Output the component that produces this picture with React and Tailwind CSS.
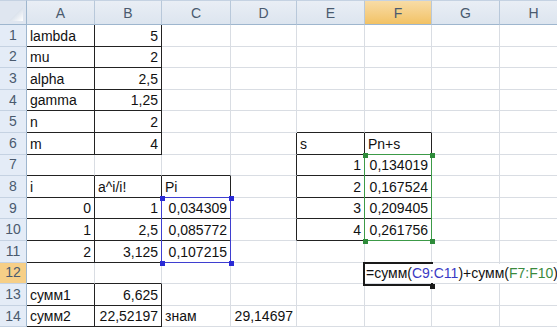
import React from 'react';

const COLS = ['A', 'B', 'C', 'D', 'E', 'F', 'G', 'H'];
const COL_X = [27, 95, 162, 231, 297, 365, 432, 500, 568];
const ROW_H = 21.6;
const HEAD_H = 25;
const rowY = (r) => HEAD_H + (r - 1) * ROW_H;

// cell values: row + column -> text; numbers are right aligned
const cells = {
  '1A': 'lambda', '1B': 5,
  '2A': 'mu', '2B': 2,
  '3A': 'alpha', '3B': '2,5',
  '4A': 'gamma', '4B': '1,25',
  '5A': 'n', '5B': 2,
  '6A': 'm', '6B': 4, '6E': 's', '6F': 'Pn+s',
  '7E': 1, '7F': '0,134019',
  '8A': 'i', '8B': 'a^i/i!', '8C': 'Pi', '8E': 2, '8F': '0,167524',
  '9A': 0, '9B': 1, '9C': '0,034309', '9E': 3, '9F': '0,209405',
  '10A': 1, '10B': '2,5', '10C': '0,085772', '10E': 4, '10F': '0,261756',
  '11A': 2, '11B': '3,125', '11C': '0,107215',
  '13A': 'сумм1', '13B': '6,625',
  '14A': 'сумм2', '14B': '22,52197', '14C': 'знам', '14D': '29,14697',
};

const isNum = (v) => typeof v === 'number' || /^[\d,]+$/.test(String(v));

// cells that carry black borders
const boxed = new Set();
const addRange = (r1, c1, r2, c2) => {
  for (let r = r1; r <= r2; r++)
    for (let c = c1; c <= c2; c++) boxed.add(`${r}${COLS[c]}`);
};
addRange(1, 0, 6, 1);
addRange(8, 0, 11, 2);
addRange(13, 0, 14, 1);
addRange(6, 4, 10, 5);

const has = (r, c) => c >= 0 && c < COLS.length && boxed.has(`${r}${COLS[c]}`);

const Cell = ({ r, c }) => {
  const v = cells[`${r}${COLS[c]}`];
  const right = has(r, c) || has(r, c + 1);
  const bottom = has(r, c) || has(r + 1, c);
  return (
    <div
      className={`flex items-end overflow-hidden whitespace-nowrap border-r border-b px-[3px] pb-[1px] leading-[18px] text-[#111] ${
        right ? 'border-r-[#222]' : 'border-r-[#d9dde3]'
      } ${bottom ? 'border-b-[#222]' : 'border-b-[#d9dde3]'} ${
        v !== undefined && isNum(v) ? 'justify-end' : 'justify-start'
      }`}
    >
      {v !== undefined ? String(v) : ''}
    </div>
  );
};

const Handle = ({ x, y, color }) => (
  <div className={`absolute h-[5px] w-[5px] ${color}`} style={{ left: x - 2, top: y - 2 }} />
);

// range highlight drawn over the grid (like Excel's reference colouring)
const Selection = ({ c1, c2, r1, r2, border, fill }) => {
  const x1 = COL_X[c1];
  const x2 = COL_X[c2 + 1];
  const y1 = rowY(r1);
  const y2 = rowY(r2 + 1);
  return (
    <>
      <div
        className={`absolute border ${border}`}
        style={{ left: x1 - 1, top: y1 - 1, width: x2 - x1 + 1, height: y2 - y1 + 1 }}
      />
      <Handle x={x1} y={y1} color={fill} />
      <Handle x={x2} y={y1} color={fill} />
      <Handle x={x1} y={y2} color={fill} />
      <Handle x={x2} y={y2} color={fill} />
    </>
  );
};

export default function App() {
  const rows = Array.from({ length: 14 }, (_, i) => i + 1);
  return (
    <div
      className="relative h-[331px] w-[557px] overflow-hidden bg-white text-[14px]"
      style={{ fontFamily: '"Liberation Sans", Arial, sans-serif' }}
    >
      <div className="grid grid-cols-[27px_68px_67px_69px_66px_68px_67px_68px_68px] grid-rows-[25px_repeat(14,21.6px)]">
        {/* select-all corner */}
        <div className="flex items-end justify-end border-t border-r border-b border-t-[#c5d2e2] border-r-[#9eb6ce] border-b-[#9eb6ce] bg-[#dfe6f0] p-[3px]">
          <svg width="14" height="14" viewBox="0 0 14 14">
            <defs>
              <linearGradient id="tri" x1="0" y1="0" x2="1" y2="1">
                <stop offset="0" stopColor="#b7c6d9" />
                <stop offset="1" stopColor="#ffffff" />
              </linearGradient>
            </defs>
            <polygon points="14,0 14,14 0,14" fill="url(#tri)" />
          </svg>
        </div>
        {COLS.map((col) => (
          <div
            key={col}
            className={`flex items-center justify-center border-t border-r border-b border-t-[#c5d2e2] border-r-[#b8c8da] border-b-[#9eb6ce] pt-[1px] text-[14px] text-[#4a5a6e] ${
              col === 'F'
                ? 'bg-gradient-to-b from-[#f8dca6] to-[#f2c264]'
                : 'bg-gradient-to-b from-[#e9eef5] to-[#dde5ef]'
            }`}
          >
            {col}
          </div>
        ))}
        {rows.map((r) => (
          <React.Fragment key={r}>
            <div
              className={`flex items-center justify-center border-r border-b border-r-[#9eb6ce] border-b-[#c5d2e2] text-[14px] text-[#4a5a6e] ${
                r === 12 ? 'bg-[#f6cf87]' : 'bg-[#e4ecf7]'
              }`}
            >
              {r}
            </div>
            {COLS.map((_, c) => (
              <Cell key={c} r={r} c={c} />
            ))}
          </React.Fragment>
        ))}
      </div>

      <Selection c1={2} c2={2} r1={9} r2={11} border="border-[#3f3fd0]" fill="bg-[#2b2bd6]" />
      <Selection c1={5} c2={5} r1={7} r2={10} border="border-[#3c9a48]" fill="bg-[#2e8b3a]" />

      {/* formula being edited in F12 */}
      <div
        className="absolute border-2 border-[#1a1a1a]"
        style={{ left: COL_X[5] - 2, top: rowY(12) - 1, width: COL_X[6] - COL_X[5] + 3, height: ROW_H + 3 }}
      />
      <div className="absolute h-[5px] w-[5px] bg-[#1a1a1a]" style={{ left: COL_X[6] - 2, top: rowY(13) }} />
      <div
        className="absolute flex items-end whitespace-nowrap bg-white pb-[1px] pl-[1px] leading-[18px] text-[#111]"
        style={{ left: COL_X[5], top: rowY(12) + 1, height: ROW_H - 2 }}
      >
        <span>=сумм(</span>
        <span className="text-[#3a3ac4]">C9:C11</span>
        <span>)+сумм(</span>
        <span className="text-[#3b8a3e]">F7:F10</span>
        <span>)</span>
        <span className="ml-[2px] inline-block h-[17px] w-[1px] bg-black" />
      </div>
    </div>
  );
}
